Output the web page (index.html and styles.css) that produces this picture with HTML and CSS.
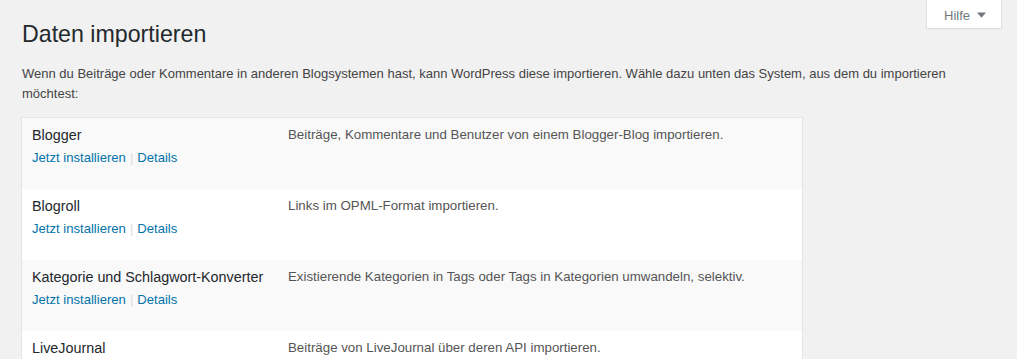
FILE: index.html
```html
<!DOCTYPE html>
<html lang="de">
<head>
<meta charset="utf-8">
<title>Daten importieren</title>
<link rel="stylesheet" href="styles.css">
</head>
<body>
<div class="help-toggle">
  <button class="help-btn" type="button">Hilfe <svg class="arrow" width="9" height="6" viewBox="0 0 9 6"><path d="M0 0.5 H9 L4.5 5.8 Z" fill="#72777c"/></svg></button>
</div>
<div class="wrap">
  <h1 class="title">Daten importieren</h1>
  <p class="intro">Wenn du Beiträge oder Kommentare in anderen Blogsystemen hast, kann WordPress diese importieren. Wähle dazu unten das System, aus dem du importieren möchtest:</p>
  <table class="importers">
    <tbody>
      <tr class="alt">
        <td class="name">
          <div class="row-title">Blogger</div>
          <div class="actions"><a href="#">Jetzt installieren</a><span class="sep">|</span><a href="#">Details</a></div>
        </td>
        <td class="desc">Beiträge, Kommentare und Benutzer von einem Blogger-Blog importieren.</td>
      </tr>
      <tr>
        <td class="name">
          <div class="row-title">Blogroll</div>
          <div class="actions"><a href="#">Jetzt installieren</a><span class="sep">|</span><a href="#">Details</a></div>
        </td>
        <td class="desc">Links im OPML-Format importieren.</td>
      </tr>
      <tr class="alt">
        <td class="name">
          <div class="row-title">Kategorie und Schlagwort-Konverter</div>
          <div class="actions"><a href="#">Jetzt installieren</a><span class="sep">|</span><a href="#">Details</a></div>
        </td>
        <td class="desc">Existierende Kategorien in Tags oder Tags in Kategorien umwandeln, selektiv.</td>
      </tr>
      <tr>
        <td class="name">
          <div class="row-title">LiveJournal</div>
          <div class="actions"><a href="#">Jetzt installieren</a><span class="sep">|</span><a href="#">Details</a></div>
        </td>
        <td class="desc">Beiträge von LiveJournal über deren API importieren.</td>
      </tr>
    </tbody>
  </table>
</div>
</body>
</html>
```

FILE: styles.css
```css
html, body {
  margin: 0;
  padding: 0;
  background: #f1f1f1;
}
body {
  font-family: "Liberation Sans", Arial, Helvetica, sans-serif;
  color: #444;
  font-size: 13px;
  line-height: 1.5;
}
.help-toggle {
  position: absolute;
  top: 0;
  right: 16px;
}
.help-btn {
  display: flex;
  align-items: center;
  gap: 7px;
  height: 28px;
  width: 74px;
  padding: 2px 0 0 17px;
  border: 0;
  background: #fff;
  box-shadow: 0 0 0 1px rgba(0,0,0,0.05), 0 1px 2px rgba(0,0,0,0.06);
  font-family: inherit;
  font-size: 13px;
  color: #72777c;
  cursor: pointer;
}
.help-btn .arrow {
  margin-top: -1px;
}
.wrap {
  padding: 19px 20px 0 22px;
}
.title {
  margin: 0;
  font-size: 23.2px;
  line-height: 30px;
  font-weight: 400;
  color: #23282d;
}
.intro {
  margin: 15px 0 14px;
  font-size: 13px;
  line-height: 19.5px;
  color: #444;
}
.importers {
  margin-left: -1px;
  width: 782px;
  border-collapse: collapse;
  border: 1px solid #e5e5e5;
  background: #fff;
  box-shadow: 0 1px 1px rgba(0,0,0,0.04);
}
.importers tr {
  height: 71px;
}
.importers tr.alt {
  background: #f9f9f9;
}
.importers td {
  vertical-align: top;
  padding: 7px 10px 10px 10px;
}
.importers td.name {
  width: 236px;
  padding-left: 10px;
}
.row-title {
  font-size: 14.35px;
  line-height: 20px;
  color: #23282d;
}
.actions {
  margin-top: 3px;
  font-size: 13.1px;
  line-height: 20px;
}
.actions a {
  color: #0073aa;
  text-decoration: none;
}
.actions .sep {
  color: #ddd;
  padding: 0 4px;
}
.desc {
  font-size: 13.3px;
  line-height: 20px;
  color: #555;
}
```
